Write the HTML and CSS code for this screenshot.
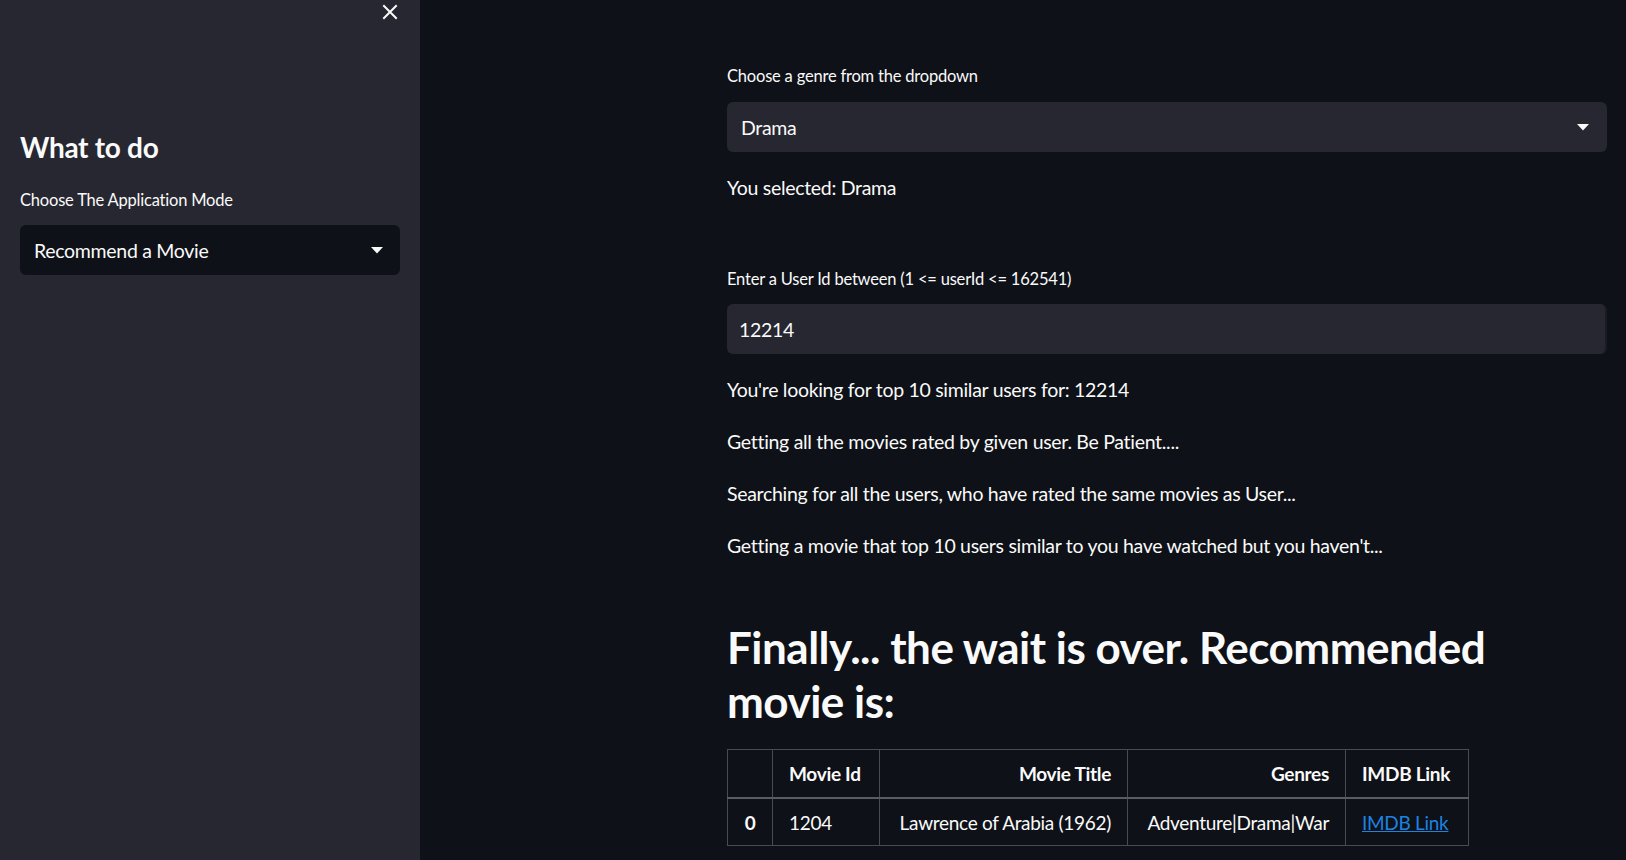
FILE: index.html
```html
<!DOCTYPE html>
<html lang="en">
<head>
<meta charset="utf-8">
<title>Movie Recommender</title>
<link rel="stylesheet" href="styles.css">
</head>
<body>
<div class="app">
  <aside class="sidebar">
    <div class="close-row">
      <svg class="close-icon" width="16" height="16" viewBox="0 0 16 16"><path d="M2 2 L14 14 M14 2 L2 14" stroke="#fafafa" stroke-width="2" stroke-linecap="square" fill="none"/></svg>
    </div>
    <h2 class="side-title">What to do</h2>
    <div class="side-label">Choose The Application Mode</div>
    <div class="select select-side">
      <span>Recommend a Movie</span>
      <svg class="caret" width="12" height="7" viewBox="0 0 12 7"><polygon points="0,0 12,0 6,6.5" fill="#fafafa"/></svg>
    </div>
  </aside>
  <main class="main">
    <div class="content">
      <div class="label">Choose a genre from the dropdown</div>
      <div class="select select-main">
        <span>Drama</span>
        <svg class="caret" width="12" height="7" viewBox="0 0 12 7"><polygon points="0,0 12,0 6,6.5" fill="#fafafa"/></svg>
      </div>
      <p class="text first-after">You selected: Drama</p>
      <div class="label label-user">Enter a User Id between (1 &lt;= userId &lt;= 162541)</div>
      <div class="input">12214</div>
      <p class="text first-after">You're looking for top 10 similar users for: 12214</p>
      <p class="text">Getting all the movies rated by given user. Be Patient....</p>
      <p class="text">Searching for all the users, who have rated the same movies as User...</p>
      <p class="text">Getting a movie that top 10 users similar to you have watched but you haven't...</p>
      <h2 class="result-title">Finally... the wait is over. Recommended movie is:</h2>
      <table class="result">
        <colgroup>
          <col class="c-idx"><col class="c-id"><col class="c-title"><col class="c-genre"><col class="c-link">
        </colgroup>
        <thead>
          <tr>
            <th></th>
            <th class="left">Movie Id</th>
            <th class="right">Movie Title</th>
            <th class="right">Genres</th>
            <th class="left">IMDB Link</th>
          </tr>
        </thead>
        <tbody>
          <tr>
            <th class="center">0</th>
            <td class="left">1204</td>
            <td class="right">Lawrence of Arabia (1962)</td>
            <td class="right">Adventure|Drama|War</td>
            <td class="left"><a href="#">IMDB Link</a></td>
          </tr>
        </tbody>
      </table>
    </div>
  </main>
</div>
</body>
</html>
```
FILE: styles.css
```css
html, body {
  margin: 0;
  padding: 0;
  height: 100%;
  overflow: hidden;
}
body {
  font-family: "Lato", "Noto Sans", sans-serif;
  color: #fafafa;
  background: #0e1117;
}
.app {
  display: flex;
  height: 860px;
}
.sidebar {
  width: 420px;
  flex: none;
  background: #262730;
  padding: 0 20px;
  box-sizing: border-box;
}
.close-row {
  display: flex;
  justify-content: flex-end;
  padding-top: 4px;
  padding-right: 2px;
}
.close-icon {
  display: block;
}
.side-title {
  margin: 109px 0 0 0;
  font-size: 28px;
  font-weight: 700;
  line-height: 36px;
  letter-spacing: -0.3px;
}
.side-label {
  margin-top: 23px;
  font-size: 16.5px;
  line-height: 24px;
  letter-spacing: -0.2px;
}
.select {
  display: flex;
  align-items: center;
  justify-content: space-between;
  height: 50px;
  border-radius: 6px;
  font-size: 19.5px;
  letter-spacing: -0.3px;
  box-sizing: border-box;
}
.select-side {
  margin-top: 13px;
  background: #0e1117;
  padding: 0 17px 0 14px;
}
.select-main {
  margin-top: 12px;
  background: #262730;
  padding: 0 18px 0 14px;
}
.caret {
  display: block;
}
.main {
  flex: 1;
  padding: 0 19px 0 307px;
}
.content {
  width: 880px;
}
.label {
  margin-top: 62px;
  font-size: 16.5px;
  line-height: 28px;
  letter-spacing: -0.2px;
}
.label-user {
  margin-top: 61px;
}
.text {
  margin: 20px 0 0 0;
  font-size: 19.5px;
  line-height: 32px;
  letter-spacing: -0.3px;
}
.input {
  margin-top: 11px;
  height: 50px;
  background: #262730;
  border-radius: 6px;
  border-right: 2px solid #1a1c23;
  box-sizing: border-box;
  display: flex;
  align-items: center;
  padding-left: 12px;
  font-size: 19.5px;
  letter-spacing: -0.3px;
}
.result-title {
  margin: 58px 0 0 0;
  font-size: 44px;
  font-weight: 700;
  line-height: 54px;
  letter-spacing: -0.5px;
}
.result {
  margin-top: 21px;
  border-collapse: collapse;
  table-layout: fixed;
  width: 741px;
  font-size: 19px;
  letter-spacing: -0.3px;
}
.c-idx { width: 45px; }
.c-id { width: 107px; }
.c-title { width: 248px; }
.c-genre { width: 218px; }
.c-link { width: 123px; }
.result th, .result td {
  border: 1px solid #494b51;
  padding: 0 16px;
  white-space: nowrap;
}
.result thead th {
  height: 47px;
  font-weight: 700;
  border-bottom: 2px solid #5a5c62;
}
.result tbody th, .result tbody td {
  height: 46px;
}
.result tbody th {
  font-weight: 700;
}
.left { text-align: left; }
.right { text-align: right; }
.center { text-align: center; }
.result a {
  color: #1c83e1;
  text-decoration: underline;
}
```
